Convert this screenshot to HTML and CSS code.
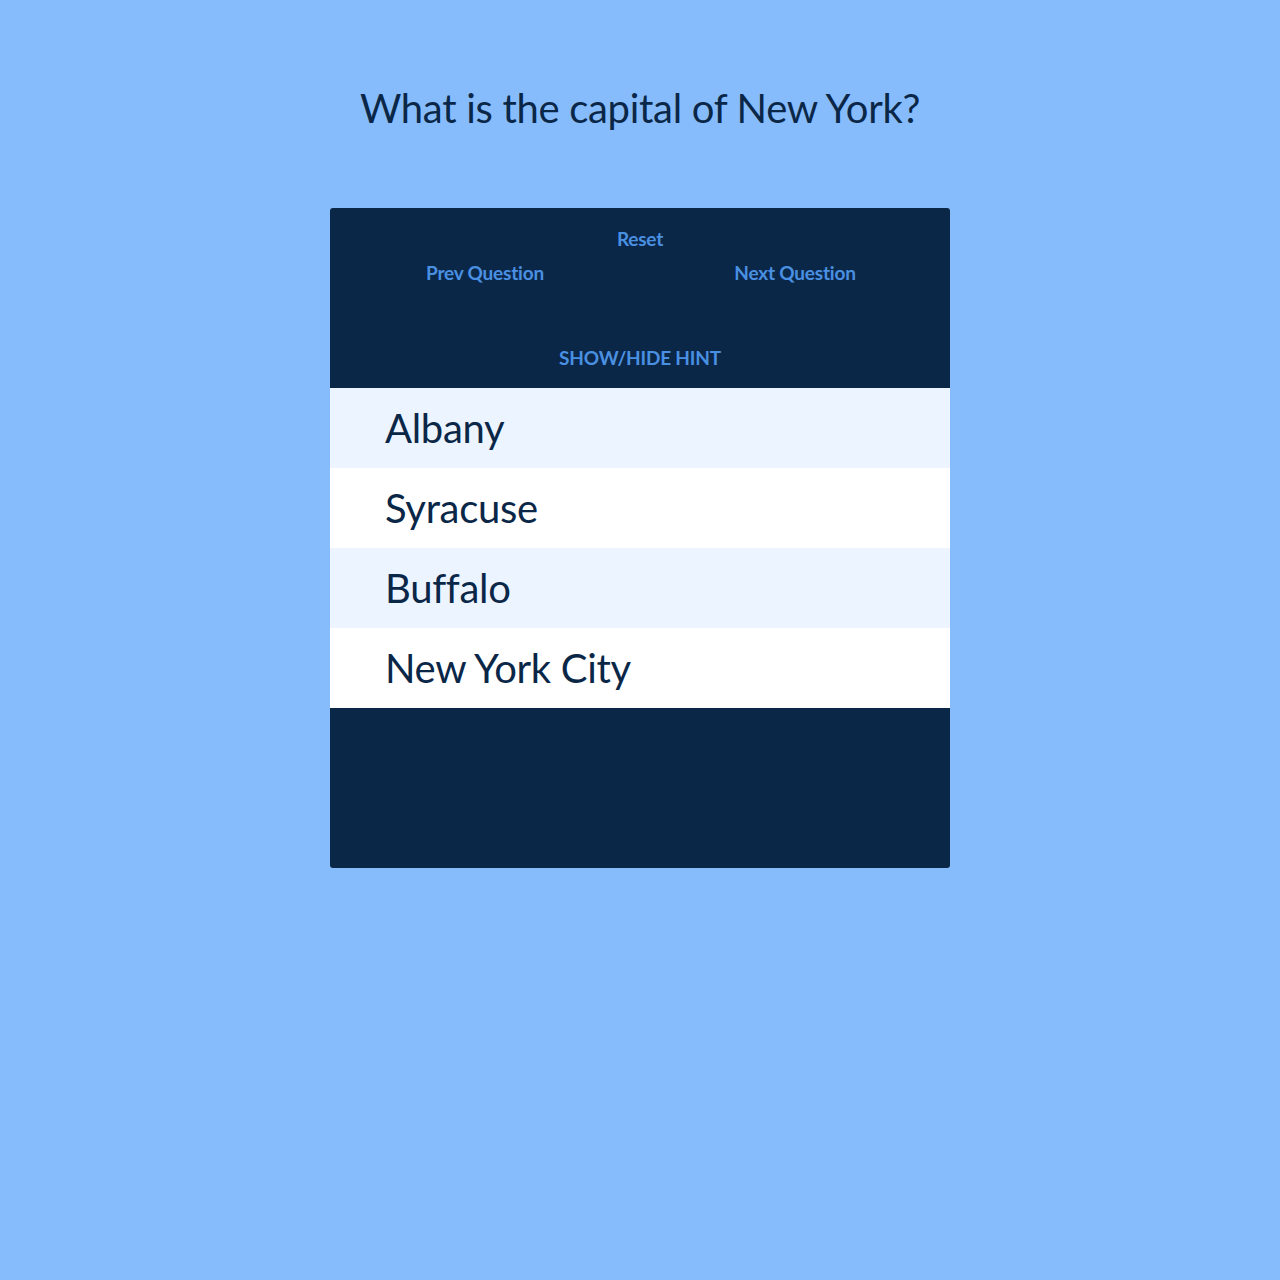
FILE: index.html
```html
<!DOCTYPE html>
<html>
<head>
<meta charset="utf-8">
<link rel="stylesheet" href="styles.css">
</head>
<body>
<div class="page">
  <h1 class="title">What is the capital of New York?</h1>
  <div class="card">
    <div class="controls">
      <div class="reset-row"><button class="link">Reset</button></div>
      <div class="nav-row">
        <div class="half"><button class="link">Prev Question</button></div>
        <div class="half"><button class="link">Next Question</button></div>
      </div>
      <div class="hint-row"><button class="link">SHOW/HIDE HINT</button></div>
    </div>
    <ul class="answers">
      <li class="answer alt">Albany</li>
      <li class="answer">Syracuse</li>
      <li class="answer alt">Buffalo</li>
      <li class="answer">New York City</li>
    </ul>
    <div class="footer"></div>
  </div>
</div>
</body>
</html>
```

FILE: styles.css
```css
html, body {
  margin: 0;
  padding: 0;
  background: #86bcfc;
  font-family: "Source Sans Pro", Lato, "Noto Sans", sans-serif;
  color: #0b2748;
}
.page {
  display: flex;
  flex-direction: column;
  align-items: center;
  padding-top: 84px;
}
.title {
  margin: 0;
  font-size: 40px;
  font-weight: 400;
  line-height: 48px;
  color: #0b2748;
  letter-spacing: -0.3px;
}
.card {
  margin-top: 76px;
  width: 620px;
  border-radius: 3px;
  overflow: hidden;
}
.controls {
  background: #0b2748;
  height: 180px;
  display: flex;
  flex-direction: column;
  padding-top: 21px;
  box-sizing: border-box;
}
.link {
  background: none;
  border: none;
  padding: 0;
  font-family: inherit;
  font-weight: 700;
  font-size: 19px;
  color: #4a90e2;
  line-height: 20px;
  cursor: pointer;
  letter-spacing: -0.2px;
}
.reset-row {
  display: flex;
  justify-content: center;
}
.nav-row {
  display: flex;
  margin-top: 14px;
}
.half {
  flex: 1;
  display: flex;
  justify-content: center;
}
.hint-row {
  display: flex;
  justify-content: center;
  margin-top: 65px;
}
.answers {
  list-style: none;
  margin: 0;
  padding: 0;
}
.answer {
  height: 80px;
  display: flex;
  align-items: center;
  padding-left: 55px;
  font-size: 40px;
  background: #ffffff;
  color: #0b2748;
  letter-spacing: -0.3px;
  line-height: 1;
}
.answer.alt {
  background: #ebf4ff;
}
.footer {
  background: #0b2748;
  height: 160px;
}
```
